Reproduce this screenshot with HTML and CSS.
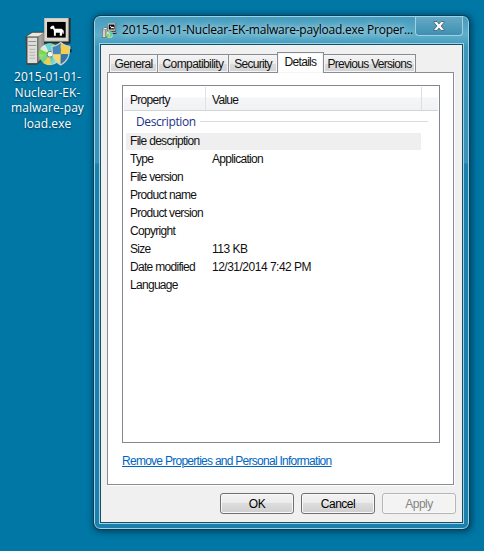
FILE: index.html
```html
<!DOCTYPE html>
<html lang="en">
<head>
<meta charset="utf-8">
<title>Properties</title>
<link rel="stylesheet" href="styles.css">
</head>
<body>
<svg width="0" height="0" class="defs" aria-hidden="true">
  <defs>
    <linearGradient id="disc" x1="0" y1="0" x2="1" y2="1"><stop offset="0" stop-color="#eef4ee"/><stop offset=".35" stop-color="#92dd63"/><stop offset=".6" stop-color="#48c9bd"/><stop offset="1" stop-color="#d9efe9"/></linearGradient>
    <linearGradient id="tower" x1="0" x2="1"><stop offset="0" stop-color="#6f6f6d"/><stop offset=".4" stop-color="#aaa9a4"/><stop offset="1" stop-color="#8b8a86"/></linearGradient>
    <clipPath id="shieldclip"><path d="M38 20C34 23 31 24 29 24C29 34 31 39 38 43C45 39 47 34 47 24C45 24 42 23 38 20Z"/></clipPath>
    <g id="installer">
      <path d="M2 14L9 9H23L19 15V39L13 43H3Z" fill="#45453f"/>
      <path d="M3 14L9 10H21L15 14Z" fill="#e8e7e1"/>
      <rect x="4" y="15" width="10" height="26" fill="#dededb"/>
      <path d="M14 15L21 10V33L14 41Z" fill="url(#tower)"/>
      <path d="M5 19H13M5 23H13" stroke="#92928d"/>
      <path d="M6 27H12M6 30H12M6 33H12M6 36H12" stroke="#b4b4af"/>
      <path d="M18 30H49V25L45 22H22Z" fill="#252522"/>
      <path d="M22 23H46L49 26H19Z" fill="#d5d2c9"/>
      <rect x="21" y="-5" width="27" height="26" fill="#2a2926"/>
      <rect x="21" y="-5" width="25" height="24" fill="#c9c7c0"/>
      <rect x="22" y="-4" width="23" height="22" fill="#dedad2"/>
      <rect x="24" y="-1" width="19" height="16" fill="#000"/>
      <path d="M27 5L29 3H31L32 6H39L41 8V11H40V8.5L39 13H37V10H33V13H31V8L30 6L28 6.5Z" fill="#fff"/>
      <circle cx="27" cy="32" r="11" fill="url(#disc)"/>
      <path d="M27 32L17 27A11 11 0 0 1 22 22Z" fill="#e4e7df"/>
      <path d="M27 32L22 22A11 11 0 0 1 29 21Z" fill="#64d4d9"/>
      <path d="M27 32L16 32A11 11 0 0 1 17 27Z" fill="#74dd45"/>
      <path d="M27 32L20 41A11 11 0 0 0 28 43Z" fill="#e9d14f"/>
      <circle cx="27" cy="32" r="3" fill="#eff6f0" stroke="#607d74"/>
    </g>
    <g id="shield">
      <g clip-path="url(#shieldclip)">
        <rect x="29" y="20" width="9" height="12" fill="#4684bd"/><rect x="38" y="20" width="9" height="12" fill="#f4cf47"/>
        <rect x="29" y="32" width="9" height="12" fill="#f7d96a"/><rect x="38" y="32" width="9" height="12" fill="#3773ad"/>
      </g>
      <path d="M38 20C34 23 31 24 29 24C29 34 31 39 38 43C45 39 47 34 47 24C45 24 42 23 38 20Z" fill="none" stroke="#c7d2d1" stroke-width="1.3"/>
    </g>
  </defs>
</svg>
<main class="desktop">
  <div class="shortcut">
    <svg class="shortcut-icon" viewBox="2 -5 49 50"><use href="#installer"/><use href="#shield"/></svg>
    <div class="shortcut-name">2015-01-01-<br>Nuclear-EK-<br>malware-pay<br>load.exe</div>
  </div>
  <section class="window">
    <header class="titlebar">
      <svg class="title-icon" viewBox="2 -5 49 50"><use href="#installer"/></svg>
      <span class="title">2015-01-01-Nuclear-EK-malware-payload.exe Proper...</span>
      <span class="close"><svg viewBox="0 0 12 10" width="12" height="10"><path d="M1 .5H4L6 2.9L8 .5H11V1.5L8.2 5L11 8.5V9.5H8L6 7.1L4 9.5H1V8.5L3.8 5L1 1.5Z" fill="#f6f8f9" stroke="#415966" stroke-width=".8"/></svg></span>
    </header>
    <div class="client">
      <nav class="tabs">
        <span class="tab general">General</span><span class="tab compat">Compatibility</span><span class="tab security">Security</span><span class="tab active">Details</span><span class="tab previous">Previous Versions</span>
      </nav>
      <div class="page">
        <div class="list">
          <div class="list-head"><span class="h-prop">Property</span><span class="h-value">Value</span><span class="h-end"></span></div>
          <div class="group"><span>Description</span><i></i></div>
          <div class="row selected"><span>File description</span></div>
          <div class="row"><span>Type</span><span>Application</span></div>
          <div class="row"><span>File version</span></div>
          <div class="row"><span>Product name</span></div>
          <div class="row"><span>Product version</span></div>
          <div class="row"><span>Copyright</span></div>
          <div class="row"><span>Size</span><span class="num">113 KB</span></div>
          <div class="row"><span>Date modified</span><span class="num">12/31/2014 7:42 PM</span></div>
          <div class="row"><span>Language</span></div>
        </div>
        <a class="link">Remove Properties and Personal Information</a>
      </div>
      <footer class="buttons"><button>OK</button><button>Cancel</button><button class="apply" disabled>Apply</button></footer>
    </div>
  </section>
</main>
</body>
</html>
```

FILE: styles.css
```css
* { box-sizing: border-box; }
body { margin: 0; overflow: hidden; font: 12px/18px "Liberation Sans", sans-serif; letter-spacing: -.7px; color: #111; }
.defs { position: absolute; }
.desktop { width: 484px; height: 551px; display: flex; background: #0077a5; }
.shortcut { width: 94px; padding-top: 18px; display: flex; flex-direction: column; align-items: center; }
.shortcut-icon { width: 49px; height: 49px; margin-left: 4px; }
.shortcut-name { margin-top: 2px; color: #fff; font: 12px/15.5px "Open Sans", sans-serif; letter-spacing: .05px; text-align: center; text-shadow: 0 1px 2px #00364f; padding-left: 1px; }
.window { width: 375px; height: 513px; margin-top: 16px; padding: 0 5px 5px 5px; border: 1px solid #9bd3e7; border-radius: 6px; outline: 1px solid #073f56; box-shadow: 1px 1px 6px 2px #00293fa8; background: linear-gradient(#469bbd 0, #5faeca 18px, #3c97bd 30px, #3b91b8 146px, #1c80ad 147px, #1d7fab); }
.titlebar { height: 27px; display: flex; padding-left: 2px; }
.title-icon { flex: none; width: 15px; height: 16px; margin-top: 6px; }
.title { width: 292px; flex: none; margin-left: 5px; font: 12px/25px "Open Sans", sans-serif; letter-spacing: -.22px; color: #000; white-space: nowrap; text-shadow: 0 0 5px #b9deea, 0 0 8px #b9deea; }
.close { flex: none; width: 48px; height: 19px; margin-left: 1px; border: 1px solid #a3d0df; border-top: 0; border-radius: 0 0 4px 4px; display: flex; justify-content: center; align-items: center; background: linear-gradient(#66a9c4, #3d90b2); }
.client { width: 363px; height: 479px; padding: 8px 7px 0 6px; background: #f0f0f0; border: 1px solid #174d65; outline: 1px solid #9bd3e7; }
.tabs { display: flex; align-items: flex-end; height: 20px; padding-left: 2px; position: relative; z-index: 1; margin-bottom: -1px; }
.tab { height: 19px; border: 1px solid #898c92; line-height: 18px; text-align: center; background: linear-gradient(#f4f4f4, #ebebeb 50%, #dcdcdc 51%, #d3d3d3); box-shadow: inset 0 0 0 1px #f5f5f5; white-space: nowrap; }
.general { width: 49px; }
.compat { width: 72px; margin-left: -1px; letter-spacing: -.6px; }
.security { width: 50px; margin-left: -1px; }
.active { width: 47px; height: 21px; margin-left: -1px; background: #fff; border-bottom: 0; line-height: 19px; }
.previous { width: 93px; margin-left: -1px; }
.page { height: 413px; border: 1px solid #898c92; background: #fff; padding: 12px 13px 0 14px; box-shadow: 1px 1px #fff; width: 347px; }
.list { width: 318px; height: 358px; border: 1px solid #828790; padding: 1px; }
.list-head { height: 24px; display: flex; line-height: 26px; border-bottom: 1px solid #d5d5d5; background: linear-gradient(#fff 45%, #f5f6f8 46%, #f1f2f4); }
.h-prop { width: 82px; padding-left: 6px; border-right: 1px solid #dfe3e7; }
.h-value { width: 216px; padding-left: 6px; border-right: 1px solid #dcdee1; }
.group { height: 21px; padding-left: 12px; display: flex; align-items: center; color: #1e3287; font: 12px/20px "Open Sans", sans-serif; }
.group span { width: 60px; white-space: nowrap; letter-spacing: -.4px; }
.group i { height: 1px; width: 228px; margin-left: 4px; background: #d7dbe0; }
.row { display: flex; height: 18px; width: 295px; margin-left: 2px; padding-left: 4px; line-height: 19px; white-space: nowrap; }
.row.selected { background: linear-gradient(#efefef, #efefef) 0 1px / 100% 17px no-repeat; }
.row span:first-child { width: 82px; }
.row .num { letter-spacing: -.5px; }
.link { display: inline-block; color: #0066bf; text-decoration: underline; margin-top: 9px; white-space: nowrap; letter-spacing: -.73px; }
.buttons { display: flex; justify-content: flex-end; gap: 7px; margin: 8px -1px 0 0; }
button { width: 74px; height: 21px; padding: 0; border: 1px solid #707070; border-radius: 3px; background: linear-gradient(#f3f3f3, #ebebeb 49%, #dddddd 50%, #cfcfcf); box-shadow: inset 0 0 0 1px #f8f8f8; color: #000; font: inherit; letter-spacing: -.5px; }
.apply { border-color: #b5b5b5; background: #f3f3f3; color: #858585; }
```
